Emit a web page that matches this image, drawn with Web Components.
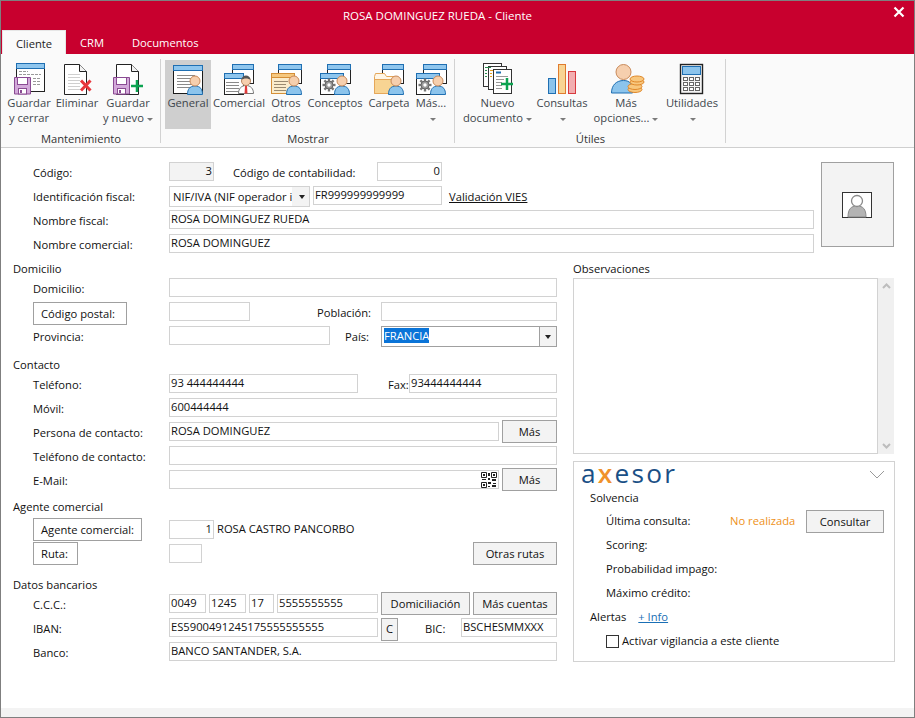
<!DOCTYPE html>
<html lang="es">
<head>
<meta charset="utf-8">
<title>Cliente</title>
<style>
  html, body { margin: 0; padding: 0; background: #fff; overflow: hidden; }
  body { font: 11.2px/16px "Open Sans", "Liberation Sans", sans-serif; color: #111; }
</style>
</head>
<body>
<app-window>
  <title-bar slot="top">ROSA DOMINGUEZ RUEDA - Cliente</title-bar>
  <ribbon-tabs slot="top"></ribbon-tabs>
  <ribbon-bar slot="top">
    <ribbon-group label="Mantenimiento" w="160" pad="4">
      <ribbon-btn icon="saveClose" w="48">Guardar<br>y cerrar</ribbon-btn>
      <ribbon-btn icon="del" w="48">Eliminar</ribbon-btn>
      <ribbon-btn icon="saveNew" w="54" caret>Guardar<br>y nuevo</ribbon-btn>
    </ribbon-group>
    <ribbon-group label="Mostrar" w="294" pad="4">
      <ribbon-btn icon="general" w="46" active>General</ribbon-btn>
      <ribbon-btn icon="comercial" w="56">Comercial</ribbon-btn>
      <ribbon-btn icon="otros" w="38">Otros<br>datos</ribbon-btn>
      <ribbon-btn icon="conceptos" w="60">Conceptos</ribbon-btn>
      <ribbon-btn icon="carpeta" w="48">Carpeta</ribbon-btn>
      <ribbon-btn icon="conceptos" w="36" caret>Más...<br></ribbon-btn>
    </ribbon-group>
    <ribbon-group label="Útiles" w="271" pad="5">
      <ribbon-btn icon="nuevo" w="75" caret>Nuevo<br>documento</ribbon-btn>
      <ribbon-btn icon="consultas" w="54" caret>Consultas<br></ribbon-btn>
      <ribbon-btn icon="opciones" w="74" caret>Más<br>opciones...</ribbon-btn>
      <ribbon-btn icon="utilidades" w="58" caret>Utilidades<br></ribbon-btn>
    </ribbon-group>
  </ribbon-bar>

  <client-form>
    <form-top>
      <form-row><form-label>Código:</form-label><form-input w="45" right grey>3</form-input><form-label ml="19" w="144">Código de contabilidad:</form-label><form-input w="65" right>0</form-input></form-row>
      <form-row><form-label>Identificación fiscal:</form-label><form-select w="141" h="21" small>NIF/IVA (NIF operador i</form-select><form-input ml="3" w="129">FR999999999999</form-input><form-link ml="7">Validación VIES</form-link></form-row>
      <form-row><form-label>Nombre fiscal:</form-label><form-input w="645">ROSA DOMINGUEZ RUEDA</form-input></form-row>
      <form-row><form-label>Nombre comercial:</form-label><form-input w="645">ROSA DOMINGUEZ</form-input></form-row>
      <photo-box slot="side"></photo-box>
    </form-top>
    <form-columns>
      <div slot="left">
        <form-head h="20">Domicilio</form-head>
        <form-row><form-label>Domicilio:</form-label><form-input w="388"></form-input></form-row>
        <form-row><form-button plain w="94">Código postal:</form-button><form-input ml="42" w="81"></form-input><form-label ml="67" w="64">Población:</form-label><form-input w="176"></form-input></form-row>
        <form-row><form-label>Provincia:</form-label><form-input w="161"></form-input><form-label ml="15" w="36">País:</form-label><form-select w="176" h="21" focus><mark>FRANCIA</mark></form-select></form-row>
        <form-head h="24">Contacto</form-head>
        <form-row><form-label>Teléfono:</form-label><form-input w="189">93 444444444</form-input><form-label ml="30" w="21">Fax:</form-label><form-input w="148">93444444444</form-input></form-row>
        <form-row><form-label>Móvil:</form-label><form-input w="388">600444444</form-input></form-row>
        <form-row><form-label>Persona de contacto:</form-label><form-input w="330">ROSA DOMINGUEZ</form-input><form-button ml="3" w="55" up center>Más</form-button></form-row>
        <form-row><form-label>Teléfono de contacto:</form-label><form-input w="388"></form-input></form-row>
        <form-row><form-label>E-Mail:</form-label><form-input w="330" qr></form-input><form-button ml="3" w="55" up center>Más</form-button></form-row>
        <form-head h="24" pb="3">Agente comercial</form-head>
        <form-row><form-button plain w="109">Agente comercial:</form-button><form-input ml="27" w="45" right down>1</form-input><form-text ml="3">ROSA CASTRO PANCORBO</form-text></form-row>
        <form-row><form-button plain w="45">Ruta:</form-button><form-input ml="91" w="33" down></form-input><form-button ml="271" w="84" center>Otras rutas</form-button></form-row>
        <form-head h="28">Datos bancarios</form-head>
        <form-row><form-label>C.C.C.:</form-label><form-input w="37">0049</form-input><form-input ml="3" w="37">1245</form-input><form-input ml="3" w="25">17</form-input><form-input ml="3" w="101">5555555555</form-input><form-button ml="3" w="89" up center>Domiciliación</form-button><form-button ml="3" w="84" up center>Más cuentas</form-button></form-row>
        <form-row><form-label>IBAN:</form-label><form-input w="209">ES5900491245175555555555</form-input><form-button ml="3" w="17" center style="padding-bottom:2px">C</form-button><form-label ml="27" w="36">BIC:</form-label><form-input w="96">BSCHESMMXXX</form-input></form-row>
        <form-row><form-label>Banco:</form-label><form-input w="388">BANCO SANTANDER, S.A.</form-input></form-row>
      </div>
      <div slot="right">
        <form-head h="20" flush>Observaciones</form-head>
        <notes-box></notes-box>
        <axesor-panel></axesor-panel>
      </div>
    </form-columns>
  </client-form>
</app-window>

<script>
// small svg helpers for the ribbon icons, coordinates are local to a 40x36 box
const win = (x, y, w, h, line = '#1f6fb2', top = '#8fc6ee', edge = '#222') =>
  `<rect x="${x + .5}" y="${y + .5}" width="${w}" height="${h}" fill="#fff" stroke="${edge}"/>
   <rect x="${x + .5}" y="${y + .5}" width="${w}" height="5" fill="${top}" stroke="${line}"/>`;
const lines = (x, y, w, n, gap = 3, color = '#8a8a8a') => Array.from({ length: n }, (_, i) =>
  `<path d="M${x} ${y + i * gap + .5}h${w}" stroke="${color}"/>`).join('');
const person = (cx, cy) =>
  `<path d="M${cx - 7.5} ${cy + 13.5}c0-5 2-8.500 7.500-8.500s7.500 3.500 7.500 8.500z" fill="#8cc4ec" stroke="#1f6fb2"/>
   <circle cx="${cx}" cy="${cy}" r="5" fill="#f6cfae" stroke="#c98a5a"/>`;
const floppy = (x, y) =>
  `<path d="M${x + .5} ${y + .5}h16v16.500h-16z" fill="#d3a9da" stroke="#8a4b93"/>
   <rect x="${x + 3.500}" y="${y + .5}" width="10" height="7" fill="#fff" stroke="#8a4b93"/>
   <rect x="${x + 4.500}" y="${y + 11.500}" width="8" height="5.500" fill="#fff" stroke="#8a4b93"/>
   <rect x="${x + 6}" y="${y + 13}" width="2" height="3" fill="#8a4b93"/>`;
const doc = (x, y, w, h) =>
  `<path d="M${x + .5} ${y + .5}h${w - 7}l7 7v${h - 7}h-${w}z" fill="#fff" stroke="#222"/>
   <path d="M${x + w - 6.500} ${y + .5}v7h7" fill="#f2f2f2" stroke="#222"/>`;
const gear = (cx, cy) => {
  const teeth = Array.from({ length: 8 }, (_, i) =>
    `<rect x="${cx - 1.200}" y="${cy - 6.500}" width="2.400" height="3" fill="#777" transform="rotate(${i * 45} ${cx} ${cy})"/>`).join('');
  return `${teeth}<circle cx="${cx}" cy="${cy}" r="4" fill="#9a9a9a" stroke="#666"/><circle cx="${cx}" cy="${cy}" r="1.700" fill="#fff"/>`;
};
const ICONS = {
  saveClose: `${win(7, 2, 28, 28)}
    <path d="M10 10.500h9M10 13.500h22M24 17.500h8M24 20.500h8M24 23.500h8" stroke="#9a9a9a" stroke-dasharray="3 1"/>${floppy(5, 16)}`,
  del: `${doc(7, 3, 22, 30)}${lines(11, 13, 12, 6, 3, '#cfcfcf')}
    <path d="M24 19.500l9.500 10M33.500 19.500l-9.500 10" stroke="#e8373d" stroke-width="3"/>`,
  saveNew: `${doc(8, 3, 22, 30)}${floppy(5, 16)}
    <path d="M29 19v12M23 25h12" stroke="#0ba350" stroke-width="2.500"/>`,
  general: `${win(5, 4, 29, 28, '#1f6fb2', '#8fc6ee', '#1a1a1a')}${lines(9, 14, 18, 5)}${person(27, 20)}`,
  comercial: `${win(13, 3, 21, 19)}${win(5, 12, 19, 21)}${lines(7, 21, 13, 4)}
    <path d="M19.500 32.500c0-5 3-8 7.500-8s7.500 3 7.500 8z" fill="#fff" stroke="#777"/>
    <path d="M26 25h2l.5 7.500h-3z" fill="#e03a3a"/>
    <circle cx="27" cy="20" r="4.500" fill="#f6cfae" stroke="#b9855e"/>
    <path d="M22.500 19c0-6 9-6 9 0-2-2-7-2-9 0z" fill="#555"/>`,
  otros: `${win(12, 3, 23, 19)}
    <rect x="5.500" y="12.500" width="23" height="20" fill="#fbeccb" stroke="#d58f38"/>
    <rect x="5.500" y="12.500" width="23" height="4" fill="#f6c87f" stroke="#d58f38"/>
    <path d="M8 20.500h14M8 23.500h12M8 26.500h12M8 29.500h12" stroke="#9a8a70"/>${person(28, 20)}`,
  conceptos: `${win(12, 3, 23, 19)}${win(5, 12, 23, 21)}${gear(14, 24)}${person(27, 20)}`,
  carpeta: `${win(13, 3, 21, 19)}
    <path d="M5.500 15.500l1-3h9l2 3h11v17h-23z" fill="#fff6e6" stroke="#e5a75a"/>
    <path d="M5.500 32.500v-14h23v14z" fill="#f8d493" stroke="#e5a75a"/>${person(27, 20)}`,
  nuevo: `<rect x="5.500" y="2.500" width="18" height="23" fill="#fff" stroke="#333"/>
    <rect x="10.500" y="5.500" width="18" height="23" fill="#fff" stroke="#333"/>
    <rect x="15.500" y="8.500" width="18" height="24" fill="#fff" stroke="#333"/>
    <path d="M7 6.500h6M7 9.500h2M7 12.500h2M7 15.500h2" stroke="#2d8a4f"/>
    <path d="M12 9.500h3M12 12.500h2M12 15.500h2" stroke="#e0a020"/>
    <path d="M18 11.500h5" stroke="#1f6fb2" stroke-width="2"/>
    <path d="M18 15.500h12M18 18.500h8M18 21.500h6M18 24.500h6M18 27.500h6" stroke="#999"/>
    <path d="M29 17v12M23 23h12" stroke="#0ba350" stroke-width="2.500"/>`,
  consultas: `<rect x="6.500" y="17.500" width="7" height="15" fill="#8cc4ec" stroke="#1f6fb2"/>
    <rect x="16.500" y="3.500" width="7" height="29" fill="#f8d493" stroke="#e07b2e"/>
    <rect x="26.500" y="10.500" width="7" height="22" fill="#f2aeb0" stroke="#d83a3f"/>`,
  opciones: `<path d="M5.500 32c0-8 5-12.500 12-12.500s9 4 9 12.500z" fill="#8cc4ec" stroke="#1f6fb2"/>
    <circle cx="17.500" cy="11" r="7.500" fill="#f6cfae" stroke="#c98a5a"/>
    ${[[29, 28.500], [29, 25.500], [31, 21], [31, 18]].map(([x, y]) =>
      `<ellipse cx="${x}" cy="${y}" rx="7" ry="3" fill="#f8c77e" stroke="#e0882a"/>`).join('')}`,
  utilidades: `<rect x="8.500" y="3.500" width="22" height="29" fill="#f4f4f4" stroke="#222" stroke-width="1.400"/>
    <rect x="10.500" y="5.500" width="18" height="8" fill="#8cc4ec" stroke="#1f6fb2"/>
    ${[16, 21, 26].map(y => [11, 17, 23].map(x =>
      `<rect x="${x + .5}" y="${y + .5}" width="4" height="3" fill="#fff" stroke="#666"/>`).join('')).join('')}`
};

// registers a custom element whose shadow root is just the given markup
function element(name, html, setup) {
  customElements.define(name, class extends HTMLElement {
    constructor() {
      super();
      this.attachShadow({ mode: 'open' }).innerHTML = html;
    }
    connectedCallback() {
      if (this.hasAttribute('w')) this.style.width = this.getAttribute('w') + 'px';
      if (this.hasAttribute('ml')) this.style.marginLeft = this.getAttribute('ml') + 'px';
      if (setup) setup(this);
    }
  });
}

element('app-window', `<style>
  :host { display: flex; flex-direction: column; box-sizing: border-box; width: 915px; height: 718px; border: 1px solid #7f7f7f; background: #fff; }
  .foot { height: 9px; background: #f3f3f3; }
  .main { flex: 1; min-height: 0; }
</style><slot name="top"></slot><div class="main"><slot></slot></div><div class="foot"></div>`);

element('title-bar', `<style>
  :host { display: flex; justify-content: center; align-items: center; height: 29px; background: #c8002e; color: #fff; position: relative; font-size: 11.5px; padding-right: 40px; }
  svg { position: absolute; right: 9px; top: 5px; }
  span { margin-top: 1px; }
</style><span><slot></slot></span>
<svg width="12" height="12" viewBox="0 0 12 12"><path d="M1.500 1.500l9 9M10.500 1.500l-9 9" stroke="#fff" stroke-width="2.200"/></svg>`);

element('ribbon-tabs', `<style>
  :host { display: flex; height: 24px; background: #c8002e; color: #fff; padding-left: 1px; box-sizing: border-box; }
  div { line-height: 25px; text-align: center; }
  .on { width: 64px; background: #fafafa; color: #222; border: 1px solid #e6e6e6; border-bottom: 0; box-sizing: border-box; }
  .a { margin-left: 14px; width: 24px; }
  .b { margin-left: 28px; width: 65px; white-space: nowrap; }
</style><div class="on">Cliente</div><div class="a">CRM</div><div class="b">Documentos</div>`);

element('ribbon-bar', `<style>
  :host { display: flex; height: 94px; box-sizing: border-box; background: #fafafa; border-bottom: 1px solid #cfcfcf; }
</style><slot></slot>`);

element('ribbon-group', `<style>
  :host { display: block; box-sizing: border-box; flex: none; height: 93px; position: relative; }
  .row { display: flex; height: 75px; padding-top: 6px; box-sizing: border-box; }
  .label { text-align: center; color: #333; line-height: 16px; margin-top: 2px; }
  .sep { position: absolute; right: 0; top: 5px; bottom: 4px; width: 1px; background: #d2d2d2; }
</style><div class="row"><slot></slot></div><div class="label"></div><div class="sep"></div>`, el => {
  el.shadowRoot.querySelector('.label').textContent = el.getAttribute('label');
  el.shadowRoot.querySelector('.row').style.paddingLeft = el.getAttribute('pad') + 'px';
});

element('ribbon-btn', `<style>
  :host { display: flex; flex-direction: column; align-items: center; flex: none; height: 69px; text-align: center; color: #40464c; line-height: 15px; white-space: nowrap; }
  :host([active]) { background: #cfcfcf; }
  svg { display: block; flex: none; margin-top: 1px; }
  .caret { display: none; vertical-align: middle; width: 0; height: 0; margin-left: 3px; border: 3px solid transparent; border-top: 3px solid #7a7a7a; border-bottom: 0; }
  :host([caret]) .caret { display: inline-block; }
</style><svg width="40" height="34" viewBox="0 0 40 34" fill="none"></svg><div class="text"><slot></slot><span class="caret"></span></div>`, el => {
  el.shadowRoot.querySelector('svg').innerHTML = ICONS[el.getAttribute('icon')];
});

element('client-form', `<style>
  :host { display: block; padding: 14px 0 0 12px; height: 100%; box-sizing: border-box; }
</style><slot></slot>`);

element('form-top', `<style>
  :host { display: flex; }
  .rows { width: 802px; }
  .side { margin-left: 6px; }
</style><div class="rows"><slot></slot></div><div class="side"><slot name="side"></slot></div>`);

element('form-columns', `<style>
  :host { display: flex; gap: 16px; }
  .left { width: 544px; flex: none; }
  .right { width: 322px; flex: none; }
</style><div class="left"><slot name="left"></slot></div><div class="right"><slot name="right"></slot></div>`);

element('form-row', `<style>
  :host { display: flex; align-items: flex-start; height: 24px; box-sizing: border-box; padding-left: 20px; white-space: nowrap; }
</style><slot></slot>`);

element('form-head', `<style>
  :host { display: flex; align-items: flex-end; padding-bottom: 1px; box-sizing: border-box; line-height: 16px; }
</style><slot></slot>`, el => {
  el.style.height = el.getAttribute('h') + 'px';
  if (el.hasAttribute('pb')) el.style.paddingBottom = el.getAttribute('pb') + 'px';
});

element('form-label', `<style>
  :host { display: block; flex: none; width: 136px; line-height: 20px; margin-top: 1px; box-sizing: border-box; }
</style><slot></slot>`);

element('form-text', `<style>
  :host { display: block; flex: none; line-height: 19px; margin-top: 1px; }
</style><slot></slot>`);

element('form-link', `<style>
  :host { display: block; flex: none; line-height: 20px; margin-top: 1px; text-decoration: underline; }
</style><slot></slot>`);

element('form-input', `<style>
  :host { display: flex; align-items: center; flex: none; position: relative; height: 19px; box-sizing: border-box; border: 1px solid #d2d2d2; padding: 0 1px 2px; background: #fff; white-space: nowrap; overflow: hidden; line-height: 15px; }
  :host([right]) { justify-content: flex-end; }
  :host([grey]) { background: #f3f3f3; }
  :host([down]) { margin-top: 2px; }
  svg { display: none; position: absolute; right: 1px; top: 1px; }
  :host([qr]) svg { display: block; }
</style><slot></slot>
<svg width="16" height="16" viewBox="0 0 16 16" fill="none" stroke="#222">
  <path d="M.5.500h5v5h-5zM10.500.500h5v5h-5zM.5 10.500h5v5h-5z"/>
  <path d="M2 2h2v2h-2zM12 2h2v2h-2zM2 12h2v2h-2zM7 1h2v3h-2zM7 6h2v2h-2zM1 7h4v1h-4zM11 7h4v2h-4zM7 10h3v2h-3zM12 11h3v1h-3zM7 14h2v1h-2zM11 13h4v2h-4z" fill="#222" stroke="none"/>
</svg>`);

element('form-select', `<style>
  :host { display: flex; align-items: stretch; flex: none; box-sizing: border-box; border: 1px solid #d2d2d2; background: #fff; height: 21px; }
  :host([focus]) { border-color: #a0a0a0; }
  .val { flex: 1; min-width: 0; overflow: hidden; white-space: nowrap; padding: 0 2px; line-height: 18px; }
  :host([small]) .val { padding-left: 3px; line-height: 19px; }
  .arrow { width: 16px; flex: none; display: flex; align-items: center; justify-content: center; background: #f3f3f3; border-left: 1px solid #a0a0a0; }
  :host([small]) .arrow { border-left: 0; padding-left: 3px; width: 14px; }
  .arrow i { width: 0; height: 0; border: 3.500px solid transparent; border-top: 4px solid #222; border-bottom: 0; }
  ::slotted(mark) { background: #0a74d8; color: #fff; }
</style><div class="val"><slot></slot></div><div class="arrow"><i></i></div>`, el => {
  el.style.height = el.getAttribute('h') + 'px';
});

element('form-button', `<style>
  :host { display: flex; align-items: center; flex: none; height: 23px; box-sizing: border-box; border: 1px solid #a0a0a0; background: #f3f3f3; padding-left: 7px; white-space: nowrap; }
  :host([plain]) { background: #fff; }
  :host([center]) { justify-content: center; padding-left: 0; }
  :host([up]) { margin-top: -2px; }
</style><slot></slot>`);

element('photo-box', `<style>
  :host { display: flex; align-items: center; justify-content: center; width: 73px; height: 85px; box-sizing: border-box; border: 1px solid #a0a0a0; background: #f3f3f3; }
  svg { display: block; margin-top: 1px; }
</style><svg width="31" height="27" viewBox="0 0 31 27">
  <rect x=".5" y=".5" width="29" height="25" fill="#fff" stroke="#333"/>
  <path d="M6 25c0-8 3-11 9-11s9 3 9 11z" fill="#b4b4b4" stroke="#8a8a8a"/>
  <circle cx="15" cy="9" r="5.500" fill="#fff" stroke="#8a8a8a" stroke-width="1.300"/>
</svg>`);

element('notes-box', `<style>
  :host { display: flex; height: 176px; margin-bottom: 7px; }
  .area { flex: 1; box-sizing: border-box; border: 1px solid #d2d2d2; background: #fff; }
  .bar { width: 16px; flex: none; background: #f0f0f0; display: flex; flex-direction: column; justify-content: space-between; align-items: center; padding: 5px 0; box-sizing: border-box; margin-right: 1px; }
</style><div class="area"></div><div class="bar">
  <svg width="9" height="6" viewBox="0 0 9 6"><path d="M1 5l3.500-3.500L8 5" fill="none" stroke="#bdbdbd" stroke-width="2"/></svg>
  <svg width="9" height="6" viewBox="0 0 9 6"><path d="M1 1l3.500 3.500L8 1" fill="none" stroke="#bdbdbd" stroke-width="2"/></svg>
</div>`);

element('axesor-panel', `<style>
  :host { display: block; position: relative; box-sizing: border-box; width: 322px; height: 201px; border: 1px solid #d2d2d2; background: #fff; line-height: 16px; }
  .logo { height: 25px; padding-left: 7px; white-space: nowrap; }
  .logo span { display: inline-block; font-size: 21px; line-height: 22px; letter-spacing: 1.800px; color: #1a4f86; transform: scale(1.25, 1.2); transform-origin: 0 50%; }
  .logo b { font-weight: 600; color: #f0922b; }
  .chev { position: absolute; right: 9px; top: 8px; }
  .r { display: flex; align-items: center; height: 24px; padding-left: 32px; white-space: nowrap; }
  .h { height: 22px; padding-left: 16px; }
  .first { position: relative; }
  .orange { position: absolute; left: 156px; color: #ee9120; }
  .btn { position: absolute; left: 232px; top: 1px; width: 78px; height: 23px; box-sizing: border-box; border: 1px solid #a0a0a0; background: #f3f3f3; display: flex; align-items: center; justify-content: center; }
  a { color: #1a6fb5; text-decoration: underline; margin-left: 12px; }
  .check { width: 13px; height: 13px; box-sizing: border-box; border: 1px solid #333; margin-right: 3px; margin-top: 1px; }
</style>
<div class="logo"><span>a<b>x</b>esor</span></div>
<svg class="chev" width="16" height="9" viewBox="0 0 16 9"><path d="M1 1l7 7 7-7" fill="none" stroke="#9a9a9a"/></svg>
<div class="r h">Solvencia</div>
<div class="r first">Última consulta:<span class="orange">No realizada</span><div class="btn">Consultar</div></div>
<div class="r">Scoring:</div>
<div class="r">Probabilidad impago:</div>
<div class="r">Máximo crédito:</div>
<div class="r" style="padding-left:16px">Alertas<a>+ Info</a></div>
<div class="r"><div class="check"></div>Activar vigilancia a este cliente</div>`);
</script>
</body>
</html>
